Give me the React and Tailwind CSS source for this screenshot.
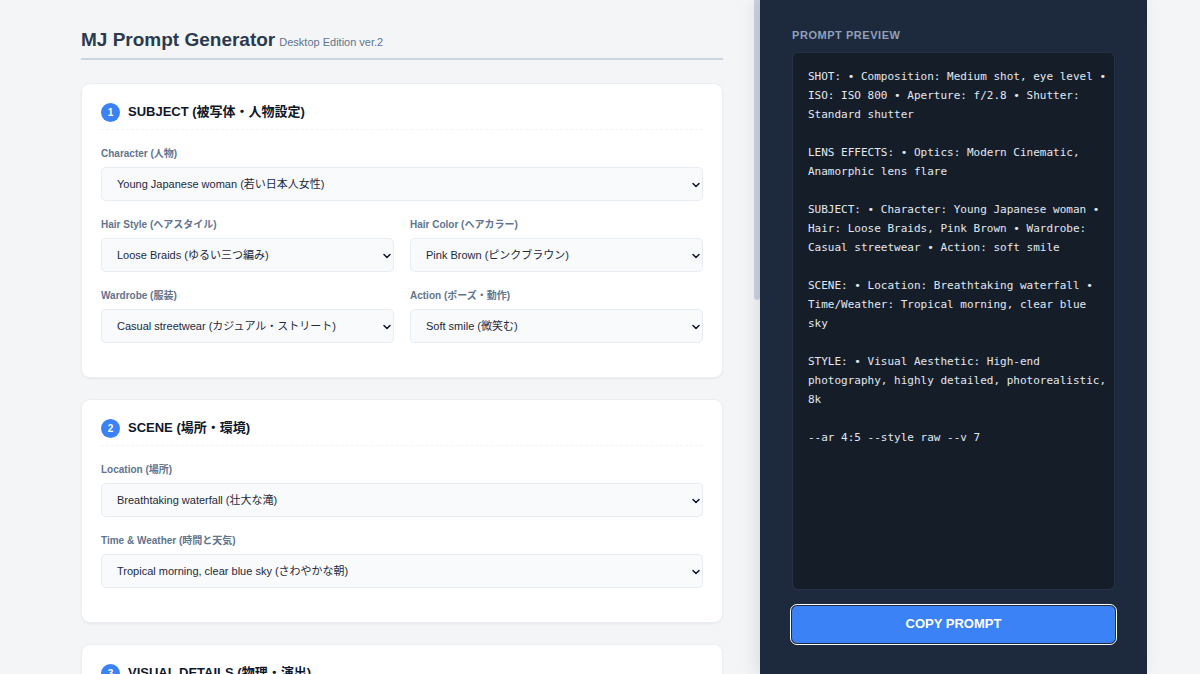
import { useState } from "react";
import { ChevronDown } from "lucide-react";

const sections = [
  {
    title: "SUBJECT (被写体・人物設定)",
    fields: [
      {
        id: "character",
        label: "Character (人物)",
        option: "Young Japanese woman (若い日本人女性)",
        wide: true,
      },
      {
        id: "hair-style",
        label: "Hair Style (ヘアスタイル)",
        option: "Loose Braids (ゆるい三つ編み)",
      },
      {
        id: "hair-color",
        label: "Hair Color (ヘアカラー)",
        option: "Pink Brown (ピンクブラウン)",
      },
      {
        id: "wardrobe",
        label: "Wardrobe (服装)",
        option: "Casual streetwear (カジュアル・ストリート)",
      },
      {
        id: "action",
        label: "Action (ポーズ・動作)",
        option: "Soft smile (微笑む)",
      },
    ],
  },
  {
    title: "SCENE (場所・環境)",
    fields: [
      {
        id: "location",
        label: "Location (場所)",
        option: "Breathtaking waterfall (壮大な滝)",
        wide: true,
      },
      {
        id: "weather",
        label: "Time & Weather (時間と天気)",
        option: "Tropical morning, clear blue sky (さわやかな朝)",
        wide: true,
      },
    ],
  },
  {
    title: "VISUAL DETAILS (物理・演出)",
    fields: [],
  },
];

const initialPrompt = `SHOT: • Composition: Medium shot, eye level •
ISO: ISO 800 • Aperture: f/2.8 • Shutter:
Standard shutter

LENS EFFECTS: • Optics: Modern Cinematic,
Anamorphic lens flare

SUBJECT: • Character: Young Japanese woman •
Hair: Loose Braids, Pink Brown • Wardrobe:
Casual streetwear • Action: soft smile

SCENE: • Location: Breathtaking waterfall •
Time/Weather: Tropical morning, clear blue
sky

STYLE: • Visual Aesthetic: High-end
photography, highly detailed, photorealistic,
8k

--ar 4:5 --style raw --v 7`;

function Field({ id, label, option, wide }) {
  return (
    <div className={wide ? "col-span-2" : ""}>
      <label
        htmlFor={id}
        className="mb-[5px] block text-[10px] leading-[17px] font-bold text-slate-500"
      >
        {label}
      </label>
      <div className="relative">
        <select
          id={id}
          className="block h-[34px] w-full appearance-none rounded-[5px] border border-slate-200/80 bg-slate-50 px-[15px] text-[11px] text-slate-800"
        >
          <option>{option}</option>
        </select>
        <ChevronDown
          size={12}
          strokeWidth={3}
          className="pointer-events-none absolute top-3 right-[1px] text-slate-900"
        />
      </div>
    </div>
  );
}

function Section({ number, title, fields }) {
  return (
    <section className="rounded-[9px] border border-slate-200/70 bg-white px-[19px] pt-[19px] pb-[34px] shadow-xs">
      <div className="mb-[15px] flex h-[27px] items-start gap-2 border-b border-dashed border-slate-100">
        <span className="flex size-[19px] shrink-0 items-center justify-center rounded-full bg-[#3b82f6] text-[10px] font-bold text-white">
          {number}
        </span>
        <h2 className="text-[13px] leading-[17px] font-bold text-slate-900">
          {title}
        </h2>
      </div>
      <div className="grid grid-cols-2 gap-x-4 gap-y-[15px]">
        {fields.map((field) => (
          <Field key={field.id} {...field} />
        ))}
      </div>
    </section>
  );
}

function PreviewPanel() {
  const [prompt, setPrompt] = useState(initialPrompt);

  return (
    <aside className="z-10 flex w-[387px] shrink-0 flex-col bg-slate-800 px-8 pt-[27px] pb-[31px] shadow-[-4px_0_16px_rgba(0,0,0,0.1)]">
      <label
        htmlFor="preview"
        className="mb-[9px] text-[11px] leading-4 font-bold tracking-wider text-slate-400"
      >
        PROMPT PREVIEW
      </label>
      <textarea
        id="preview"
        value={prompt}
        spellCheck={false}
        onChange={(e) => setPrompt(e.target.value)}
        className="mb-4 min-h-0 w-full flex-1 resize-none overflow-hidden rounded-md border border-slate-700/60 bg-[#151d29] py-[14px] pr-1 pl-[15px] font-['DejaVu_Sans_Mono',monospace] text-[11px] leading-[19px] text-slate-200 outline-none"
      />
      <button
        type="button"
        onClick={() => navigator.clipboard.writeText(prompt)}
        className="h-[37px] rounded-[5px] bg-[#3b82f6] pb-[2px] text-[13px] font-bold text-white outline outline-offset-1 outline-white"
      >
        COPY PROMPT
      </button>
    </aside>
  );
}

export default function App() {
  return (
    <div className="flex h-screen overflow-hidden bg-[#f3f5f7] pr-[53px] pl-[49px] font-['Liberation_Sans','Noto_Sans_CJK_JP',sans-serif]">
      <main className="min-w-0 flex-1 overflow-hidden pt-[25px] pr-[31px] pl-8">
        <header className="mb-[23px] flex h-[35px] items-baseline gap-1 border-b-2 border-slate-300">
          <h1 className="text-[19px] leading-[30px] font-bold text-[#2c3a50]">
            MJ Prompt Generator
          </h1>
          <span className="text-[11px] text-slate-500">
            Desktop Edition ver.2
          </span>
        </header>
        <div className="flex flex-col gap-[21px]">
          {sections.map((section, i) => (
            <Section key={section.title} number={i + 1} {...section} />
          ))}
        </div>
      </main>
      {/* scroll thumb of the form column */}
      <div className="h-[300px] w-[6px] shrink-0 rounded-b-[3px] bg-slate-300" />
      <PreviewPanel />
    </div>
  );
}
